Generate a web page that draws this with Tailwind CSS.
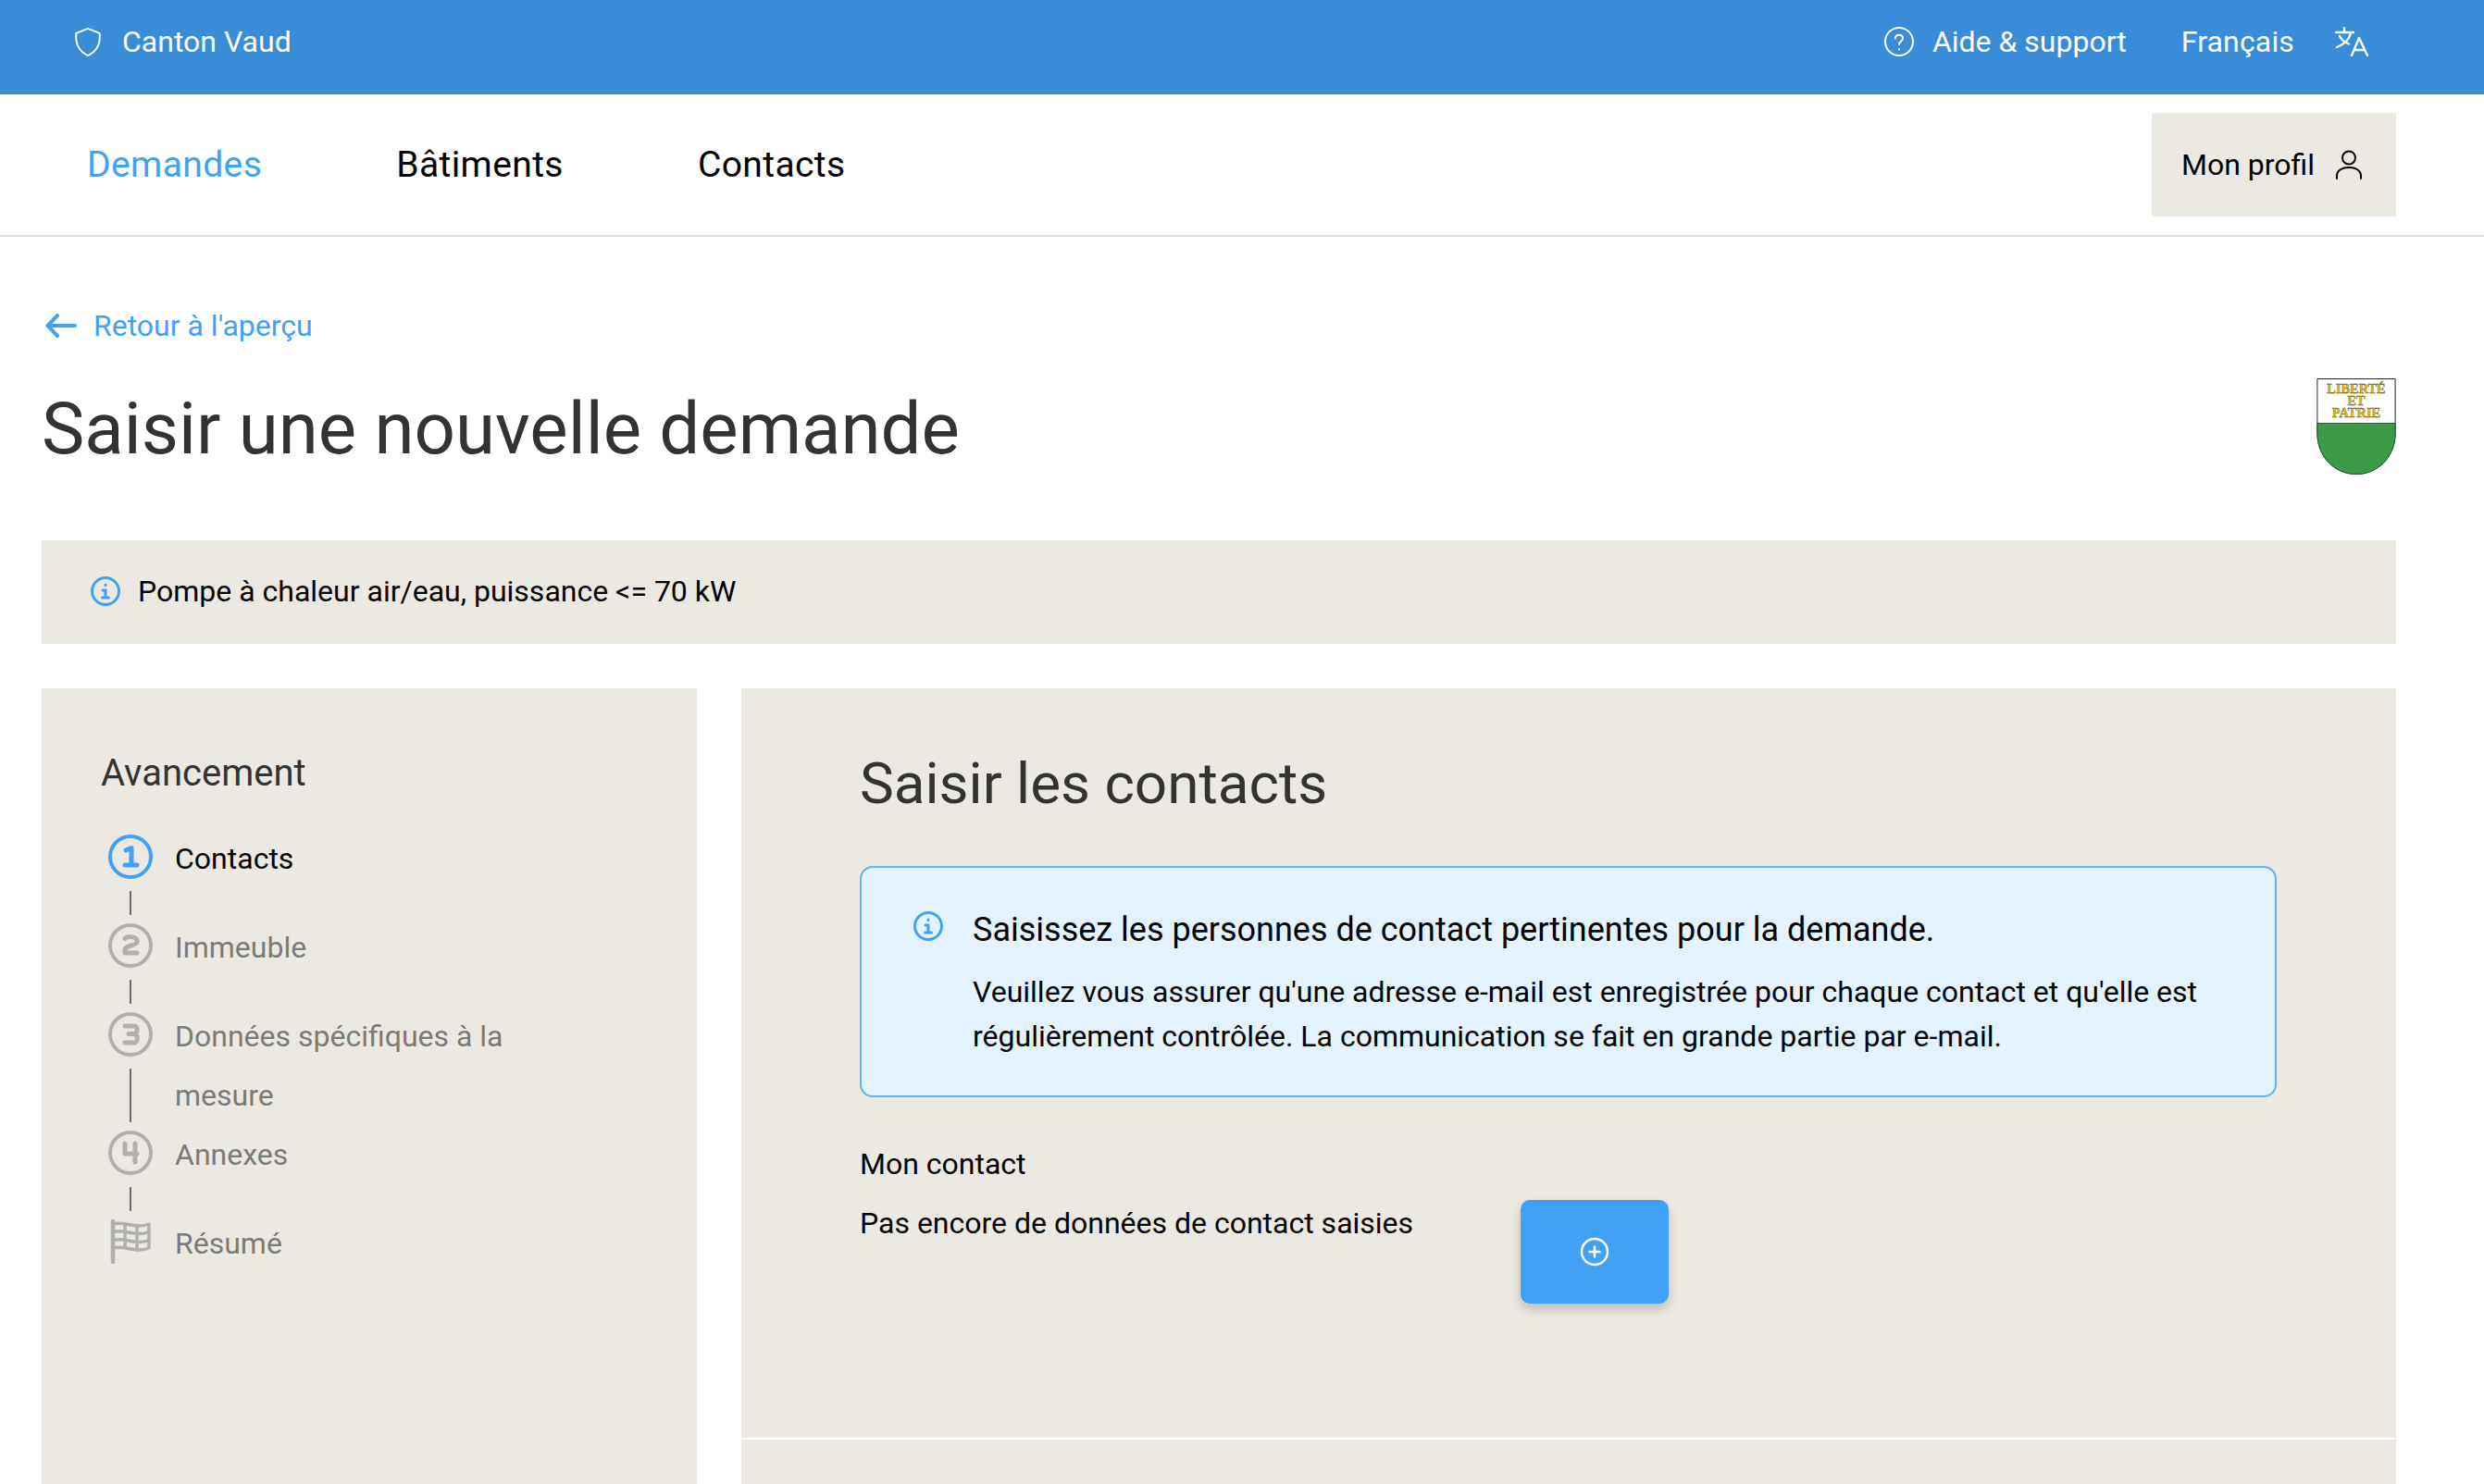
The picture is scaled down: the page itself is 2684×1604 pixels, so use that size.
<!DOCTYPE html>
<html lang="fr">
<head>
<meta charset="utf-8">
<title>Saisir une nouvelle demande</title>
<script src="https://cdn.jsdelivr.net/npm/@tailwindcss/browser@4"></script>
</head>
<body class="bg-white">
<div class="h-[1604px] overflow-hidden flex flex-col font-['Roboto',sans-serif] text-[32px] text-black">
  <header class="h-[102px] shrink-0 bg-[#3a8bd8] text-white flex items-center justify-between pb-[12px] pl-[80px] pr-[125px]">
    <div class="flex items-center gap-[22px]">
      <svg class="w-[30px] h-[31px]" viewBox="0 0 30 32" fill="none" stroke="white" stroke-width="2" stroke-linejoin="round"><path d="M15 1 L28 6 C29 16 26 26 15 31 C4 26 1 16 2 6 Z"/></svg>
      <span>Canton Vaud</span>
    </div>
    <div class="flex items-center">
      <svg class="w-[32px] h-[32px] mr-[20px]" viewBox="0 0 32 32" fill="none" stroke="white" stroke-width="2" stroke-linecap="round"><circle cx="16" cy="16" r="15"/><path d="M12 12.500 C12 7.500 20 7.500 20 12.500 C20 15.500 16 15.500 16 19"/><path d="M16 24v.5"/></svg>
      <span>Aide &amp; support</span>
      <span class="ml-[59px] tracking-[0.15px]">Français</span>
      <svg class="w-[36px] h-[32px] ml-[44px]" viewBox="0 0 36 32" fill="none" stroke="white" stroke-width="2.400" stroke-linecap="round" stroke-linejoin="round"><path d="M1 6h19M10 1v5M17 6c-1 7-7 13-15 16M5 10c2 4 6 7 10 8.500M18 31l8-19 9 19M21 25h11"/></svg>
    </div>
  </header>
  <nav class="h-[154px] shrink-0 border-b-2 border-[#dedcd4] flex items-center justify-between pl-[94px] pr-[95px]">
    <div class="flex items-center gap-[145px] text-[39px] tracking-[0.4px]">
      <a class="text-[#42a0f5]">Demandes</a>
      <a>Bâtiments</a>
      <a>Contacts</a>
    </div>
    <div class="w-[264px] h-[112px] bg-[#ece9e3] flex items-center pl-[32px] gap-[22px]">
      <span>Mon profil</span>
      <svg class="w-[30px] h-[32px]" viewBox="0 0 30 32" fill="none" stroke="black" stroke-width="2" stroke-linecap="round"><circle cx="15" cy="8.500" r="7"/><path d="M2 31v-3C2 22 8 19 15 19S28 22 28 28v3"/></svg>
    </div>
  </nav>
  <main class="flex-1 flex flex-col pl-[45px] pr-[95px] min-h-0">
    <a class="mt-[78px] h-[36px] flex items-center gap-[18px] text-[#42a0f5]">
      <svg class="w-[34px] h-[26px] ml-[4px]" viewBox="0 0 34 26" fill="none" stroke="#42a0f5" stroke-width="4" stroke-linecap="round" stroke-linejoin="round"><path d="M32 13H3M13 2 2.500 13 13 24"/></svg>
      <span>Retour à l'aperçu</span>
    </a>
    <div class="flex justify-between mt-[39px] h-[104px]">
      <h1 class="text-[78px] leading-[94px] mt-[8px] text-[#333333]">Saisir une nouvelle demande</h1>
      <svg class="w-[86px] h-[104px] shrink-0" viewBox="0 0 86 105">
        <path d="M.5.5H85.500V60C85.500 86 66 104.500 43 104.500S.5 86 .5 60Z" fill="#fff" stroke="#222"/>
        <path d="M.5 49H85.500V60C85.500 86 66 104.500 43 104.500S.5 86 .5 60Z" fill="#3c9a48" stroke="#2f5a33"/>
        <g font-family="Liberation Serif" font-size="15.500" font-weight="700" fill="#e8bb17" stroke="#5a4a10" stroke-width=".4" text-anchor="middle">
          <text x="43" y="16" textLength="64" lengthAdjust="spacingAndGlyphs">LIBERTÉ</text>
          <text x="43" y="29" textLength="19" lengthAdjust="spacingAndGlyphs">ET</text>
          <text x="43" y="42" textLength="53" lengthAdjust="spacingAndGlyphs">PATRIE</text>
        </g>
      </svg>
    </div>
    <div class="mt-[71px] h-[112px] shrink-0 bg-[#ece9e3] flex items-center pl-[53px] gap-[19px] pb-[2px]">
      <svg class="w-[32px] h-[32px]" viewBox="0 0 32 32" fill="none" stroke="#42a0f5" stroke-width="3" stroke-linecap="round"><circle cx="16" cy="16" r="14.500"/><path d="M16 9v.5M13 15h3v8M12.500 23h7"/></svg>
      <span>Pompe à chaleur air/eau, puissance &lt;= 70 kW</span>
    </div>
    <div class="mt-[48px] flex-1 flex gap-[48px] min-h-0">
      <aside class="w-[708px] shrink-0 bg-[#ece9e3] pt-[63px] pl-[64px]">
        <h2 class="text-[40px] leading-[58px] text-[#333333]">Avancement</h2>
        <ol class="mt-[31px] pl-[8px]">
          <li class="flex min-h-[96px] gap-[24px]">
            <div class="w-[48px] flex flex-col items-center pt-[6px]">
              <svg class="w-[48px] h-[48px] shrink-0" viewBox="0 0 48 48" fill="none" stroke="#42a0f5" stroke-width="4" stroke-linecap="round" stroke-linejoin="round"><circle cx="24" cy="24" r="22"/><path d="M19 17 25 14.500V33M18 33h13" stroke-width="5"/></svg>
              <div class="w-[2px] flex-1 mt-[13px] mb-[3px] bg-[#6f6f6c]"></div>
            </div>
            <span class="leading-[64px] w-[400px]">Contacts</span>
          </li>
          <li class="flex min-h-[96px] gap-[24px] text-[#7a7a77]">
            <div class="w-[48px] flex flex-col items-center pt-[6px]">
              <svg class="w-[48px] h-[48px] shrink-0" viewBox="0 0 48 48" fill="none" stroke="#b0b0ac" stroke-width="4" stroke-linecap="round" stroke-linejoin="round"><circle cx="24" cy="24" r="22"/><path d="M18 16.500C19 14 31 13 31 19.500C31 25 18 23 18 29V32H31" stroke-width="5"/></svg>
              <div class="w-[2px] flex-1 mt-[13px] mb-[3px] bg-[#6f6f6c]"></div>
            </div>
            <span class="leading-[64px] w-[400px]">Immeuble</span>
          </li>
          <li class="flex min-h-[96px] gap-[24px] text-[#7a7a77]">
            <div class="w-[48px] flex flex-col items-center pt-[6px]">
              <svg class="w-[48px] h-[48px] shrink-0" viewBox="0 0 48 48" fill="none" stroke="#b0b0ac" stroke-width="4" stroke-linecap="round" stroke-linejoin="round"><circle cx="24" cy="24" r="22"/><path d="M18 15H28C32 15 32 23 28 23.500H22M28 23.500C33 24 32 33 28 33H18" stroke-width="5"/></svg>
              <div class="w-[2px] flex-1 mt-[13px] mb-[3px] bg-[#6f6f6c]"></div>
            </div>
            <span class="leading-[64px] w-[400px]">Données spécifiques à la mesure</span>
          </li>
          <li class="flex min-h-[96px] gap-[24px] text-[#7a7a77]">
            <div class="w-[48px] flex flex-col items-center pt-[6px]">
              <svg class="w-[48px] h-[48px] shrink-0" viewBox="0 0 48 48" fill="none" stroke="#b0b0ac" stroke-width="4" stroke-linecap="round" stroke-linejoin="round"><circle cx="24" cy="24" r="22"/><path d="M18 14V25H31M29 14V34" stroke-width="5"/></svg>
              <div class="w-[2px] flex-1 mt-[13px] mb-[3px] bg-[#6f6f6c]"></div>
            </div>
            <span class="leading-[64px] w-[400px]">Annexes</span>
          </li>
          <li class="flex min-h-[96px] gap-[24px] text-[#7a7a77]">
            <div class="w-[48px] flex flex-col items-center pt-[6px]">
              <svg class="w-[48px] h-[48px] shrink-0" viewBox="0 0 48 48" fill="none" stroke="#b0b0ac" stroke-width="3.500" stroke-linecap="round" stroke-linejoin="round"><path d="M5 2V46" stroke-width="4.500"/><path d="M5 5C17 1 29 11 44 5V31C29 37 17 27 5 31M5 13.500C17 9.500 29 19.500 44 13.500M5 22.500C17 18.500 29 28.500 44 22.500M18 5V30M31 8V33"/></svg>
            </div>
            <span class="leading-[64px] w-[400px]">Résumé</span>
          </li>
        </ol>
      </aside>
      <section class="flex-1 bg-[#ece9e3] flex flex-col min-h-0">
        <div class="h-[810px] shrink-0 pl-[128px] pr-[129px] pt-[60px]">
          <h2 class="text-[62px] leading-[86px] text-[#333333]">Saisir les contacts</h2>
          <div class="mt-[46px] h-[250px] rounded-[14px] border-2 border-[#5fb3f3] bg-[#e3f2fd] flex pl-[56px] pt-[47px] gap-[32px]">
            <svg class="w-[32px] h-[32px] shrink-0" viewBox="0 0 32 32" fill="none" stroke="#42a0f5" stroke-width="3" stroke-linecap="round"><circle cx="16" cy="16" r="14.500"/><path d="M16 9v.5M13 15h3v8M12.500 23h7"/></svg>
            <div>
              <p class="text-[36px] leading-[42px] -mt-[1px]">Saisissez les personnes de contact pertinentes pour la demande.</p>
              <p class="mt-[22px] leading-[48px]">Veuillez vous assurer qu'une adresse e-mail est enregistrée pour chaque contact et qu'elle est<br>régulièrement contrôlée. La communication se fait en grande partie par e-mail.</p>
            </div>
          </div>
          <p class="mt-[50px] leading-[44px]">Mon contact</p>
          <div class="flex items-start mt-[19px]">
            <p class="leading-[48px] w-[714px] -mt-[1px]">Pas encore de données de contact saisies</p>
            <button class="w-[160px] h-[112px] rounded-[10px] bg-[#42a0f5] flex items-center justify-center shadow-[0_6px_12px_rgba(0,0,0,0.2)] -mt-[2px]">
              <svg class="w-[32px] h-[32px]" viewBox="0 0 32 32" fill="none" stroke="white" stroke-width="2.500" stroke-linecap="round"><circle cx="16" cy="16" r="14"/><path d="M16 10.500v11M10.500 16h11"/></svg>
            </button>
          </div>
        </div>
        <div class="h-[2px] shrink-0 bg-white"></div>
      </section>
    </div>
  </main>
</div>
</body>
</html>
